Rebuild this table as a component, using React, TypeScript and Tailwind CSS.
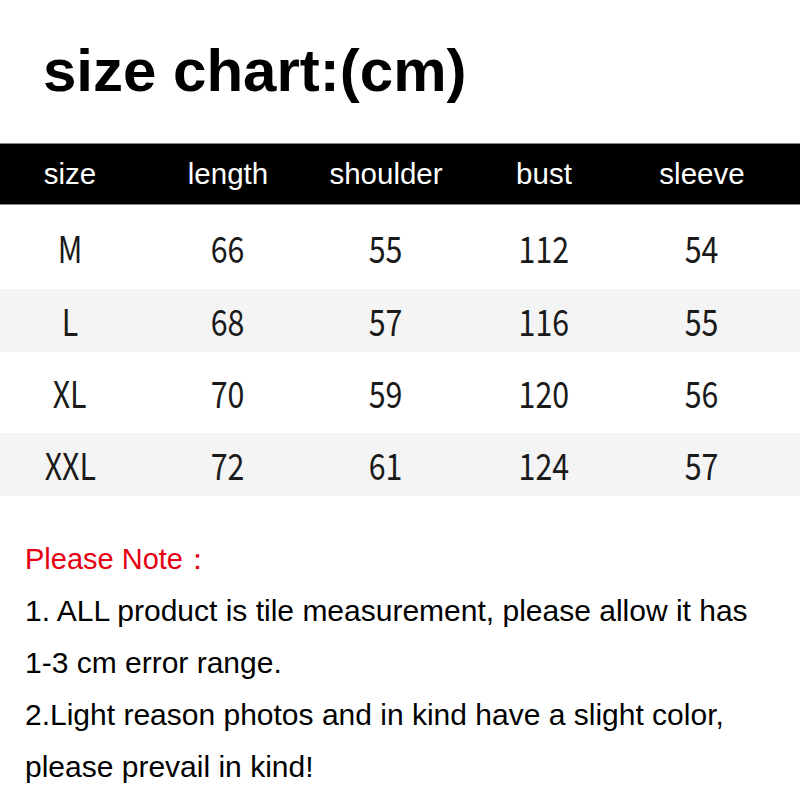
const headers = ['size', 'length', 'shoulder', 'bust', 'sleeve'];

const rows = [
  { cells: ['M', '66', '55', '112', '54'], h: 'h-[84px]', bg: 'bg-white' },
  { cells: ['L', '68', '57', '116', '55'], h: 'h-[63px]', bg: 'bg-[#f4f4f4]' },
  { cells: ['XL', '70', '59', '120', '56'], h: 'h-[81px]', bg: 'bg-white' },
  { cells: ['XXL', '72', '61', '124', '57'], h: 'h-[63px]', bg: 'bg-[#f4f4f4]' },
];

const notes = [
  '1. ALL product is tile measurement, please allow it has',
  '1-3 cm error range.',
  '2.Light reason photos and in kind have a slight color,',
  'please prevail in kind!',
];

const App = () => {
  return (
    <div className="w-[800px] h-[800px] bg-white overflow-hidden font-['Liberation_Sans',Arial,sans-serif]">
      <h1 className="pt-[41px] pl-[43px] text-[60px] leading-none font-bold text-black">
        size chart:(cm)
      </h1>

      <div className="mt-[42px]">
        {/* header bar */}
        <div className="flex h-[62px] bg-black border-y border-[#8a8a8a] text-white text-[29.5px] leading-[60px]">
          {headers.map((h, i) => (
            <div
              key={h}
              className={`w-[158px] shrink-0 text-center ${i === 0 ? '-ml-[9px]' : ''}`}
            >
              {h}
            </div>
          ))}
        </div>

        {/* data rows */}
        {rows.map((row) => (
          <div
            key={row.cells[0]}
            className={`flex items-center ${row.h} ${row.bg} text-[37px] leading-none text-[#1a1a1a] font-['Noto_Sans_CJK_SC',sans-serif]`}
          >
            {row.cells.map((c, i) => (
              <div
                key={i}
                className={`w-[158px] shrink-0 text-center ${i === 0 ? '-ml-[9px]' : ''}`}
              >
                <span className="inline-block scale-x-[0.82]">{c}</span>
              </div>
            ))}
          </div>
        ))}
      </div>

      <div className="pt-[37px] pl-[25px] leading-[52px]">
        <p className="text-[29px] text-[#e60012]">Please Note：</p>
        {notes.map((n) => (
          <p key={n} className="text-[30px] text-black">
            {n}
          </p>
        ))}
      </div>
    </div>
  );
};

export default App;
